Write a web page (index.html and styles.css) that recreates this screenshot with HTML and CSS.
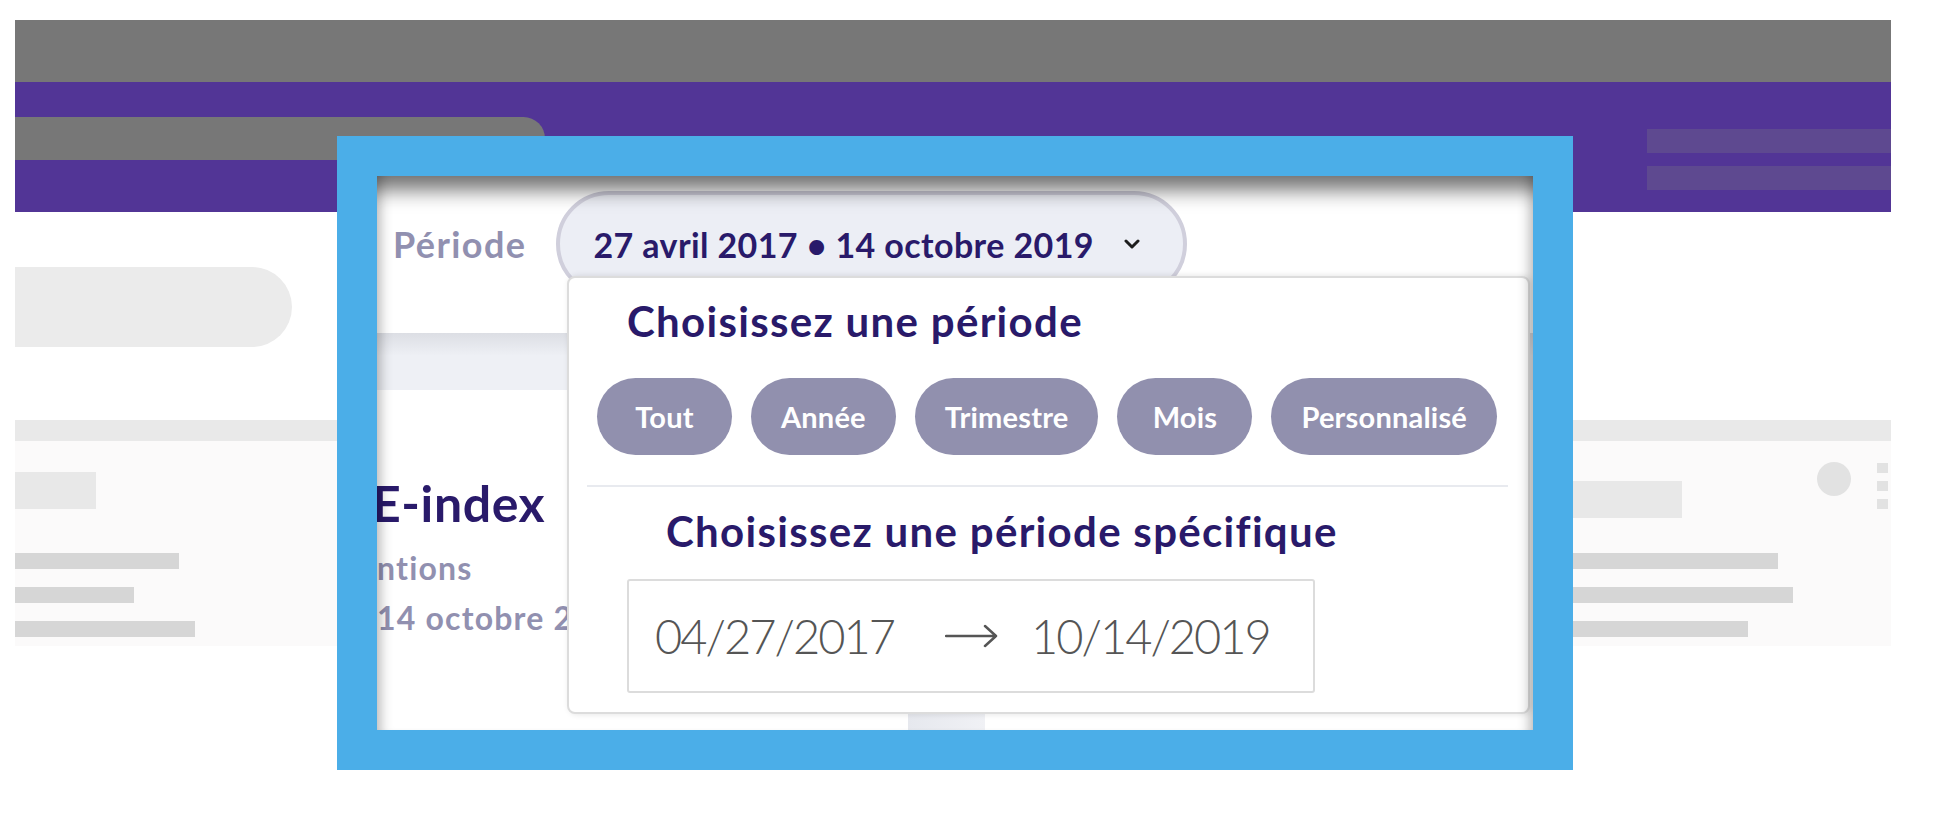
FILE: index.html
```html
<!DOCTYPE html>
<html lang="fr">
<head>
  <meta charset="UTF-8">
  <meta name="viewport" content="width=device-width, initial-scale=1.0">
  <title>Index Égalité - Choix de la période</title>
  <link rel="stylesheet" href="styles.css">
</head>
<body>
  <div class="page">
    <div class="topbar"></div>
    <div class="header">
      <div class="search"></div>
      <div class="header-lines">
        <span></span>
        <span></span>
      </div>
    </div>
    <div class="filter"></div>
    <div class="cards">
      <div class="card card-left">
        <div class="card-top"></div>
        <div class="card-body">
          <div class="card-main">
            <div class="block"></div>
            <div class="line w1"></div>
            <div class="line w2"></div>
            <div class="line w3"></div>
          </div>
        </div>
      </div>
      <div class="card card-right">
        <div class="card-top"></div>
        <div class="card-body">
          <div class="card-main">
            <div class="block"></div>
            <div class="line w4"></div>
            <div class="line w5"></div>
            <div class="line w6"></div>
          </div>
          <div class="card-side">
            <div class="avatar"></div>
            <div class="dots"><span></span><span></span><span></span></div>
          </div>
        </div>
      </div>
    </div>
  </div>

  <!-- zoomed view of the period picker -->
  <div class="frame">
    <div class="zoom">
      <div class="period-bar">
        <span class="period-label">Période</span>
        <div class="period-pill">
          <span>27 avril 2017 • 14 octobre 2019</span>
          <svg width="16" height="10" viewBox="0 0 16 10"><polyline points="2,2 8,8 14,2" fill="none" stroke="#1d1d1d" stroke-width="3" stroke-linecap="round" stroke-linejoin="round"/></svg>
        </div>
      </div>
      <div class="table-head"></div>
      <h1 class="index-title">E-index</h1>
      <p class="index-sub">ntions</p>
      <p class="index-sub">14 octobre 2019</p>
      <div class="stub"></div>

      <div class="dropdown">
        <h2 class="drop-title">Choisissez une période</h2>
        <div class="choices">
          <button class="choice">Tout</button>
          <button class="choice">Année</button>
          <button class="choice">Trimestre</button>
          <button class="choice">Mois</button>
          <button class="choice">Personnalisé</button>
        </div>
        <hr class="divider">
        <h2 class="drop-title specific">Choisissez une période spécifique</h2>
        <div class="range">
          <span>04/27/2017</span>
          <svg class="arrow" width="54" height="24" viewBox="0 0 54 24"><path d="M1 12 H51 M40 2 L51 12 L40 22" fill="none" stroke="#555" stroke-width="2.5" stroke-linecap="round" stroke-linejoin="round"/></svg>
          <span>10/14/2019</span>
        </div>
      </div>
    </div>
  </div>
</body>
</html>
```

FILE: styles.css
```css
* {
  box-sizing: border-box;
}
body {
  margin: 0;
  width: 1954px;
  height: 818px;
  overflow: hidden;
  background: #fff;
  font-family: Lato, "Open Sans", sans-serif;
}

/* background page skeleton */
.page {
  width: 1876px;
  margin: 20px 0 0 15px;
}
.topbar {
  height: 62px;
  background: #777;
}
.header {
  height: 130px;
  background: #523596;
  display: flex;
  justify-content: space-between;
  align-items: flex-start;
}
.search {
  width: 530px;
  height: 43px;
  margin-top: 35px;
  background: #777;
  border-radius: 0 22px 22px 0;
}
.header-lines {
  width: 244px;
  margin-top: 47px;
  display: flex;
  flex-direction: column;
  gap: 13px;
}
.header-lines span {
  height: 24px;
  background: #5e4990;
}
.filter {
  width: 277px;
  height: 80px;
  margin-top: 55px;
  background: #ebebeb;
  border-radius: 0 40px 40px 0;
}
.cards {
  display: flex;
  justify-content: space-between;
  margin-top: 73px;
}
.card {
  width: 560px;
  height: 226px;
  background: #fbfafa;
}
.card-top {
  height: 21px;
  background: #e9e9e9;
}
.card-body {
  display: flex;
}
.card-main {
  flex: 1;
  display: flex;
  flex-direction: column;
  align-items: flex-start;
}
.card-left .card-main {
  padding-top: 31px;
}
.card-right .card-main {
  padding: 40px 0 0 200px;
}
.block {
  height: 37px;
  background: #e8e8e8;
}
.card-left .block {
  width: 81px;
  margin-bottom: 44px;
}
.card-right .block {
  width: 151px;
  margin-bottom: 35px;
}
.line {
  height: 16px;
  margin-bottom: 18px;
  background: #d6d6d6;
}
.w1 { width: 164px; }
.w2 { width: 119px; }
.w3 { width: 180px; }
.w4 { width: 247px; }
.w5 { width: 262px; }
.w6 { width: 217px; }
.card-side {
  display: flex;
  gap: 26px;
  margin: 21px 3px 0 0;
}
.avatar {
  width: 34px;
  height: 34px;
  border-radius: 50%;
  background: #e2e2e2;
}
.dots {
  display: flex;
  flex-direction: column;
  gap: 8px;
  margin-top: 1px;
}
.dots span {
  width: 11px;
  height: 10px;
  background: #e2e2e2;
}

/* highlighted zoom frame */
.frame {
  position: absolute;
  left: 337px;
  top: 136px;
  border: 40px solid #4baee8;
}
.zoom {
  position: relative;
  width: 1156px;
  height: 554px;
  overflow: hidden;
  background: #fff;
}
.zoom::after {
  content: "";
  position: absolute;
  inset: 0;
  pointer-events: none;
  box-shadow: inset 0 30px 20px -16px rgba(0,0,0,0.55),
              inset 14px 0 12px -10px rgba(0,0,0,0.25),
              inset -14px 0 12px -10px rgba(0,0,0,0.25);
}
.period-bar {
  display: flex;
  align-items: center;
  gap: 30px;
  padding: 15px 0 0 16px;
}
.period-label {
  font-size: 36px;
  font-weight: 700;
  letter-spacing: 1.4px;
  color: #9190b0;
}
.period-pill {
  height: 106px;
  display: flex;
  align-items: center;
  gap: 30px;
  padding: 0 43px 0 33px;
  border: 4px solid #d0cfdc;
  border-radius: 53px;
  background: #eceef5;
  font-size: 34px;
  font-weight: 700;
  letter-spacing: 0.4px;
  color: #291a6a;
}
.table-head {
  height: 57px;
  margin-top: 36px;
  background: linear-gradient(#dcdee4, #eef0f5 40%);
}
.index-title {
  margin: 88px 0 0 -5px;
  font-size: 50px;
  line-height: 50px;
  font-weight: 700;
  letter-spacing: 0.6px;
  color: #291a6a;
}
.index-sub {
  margin: 0;
  font-size: 32px;
  line-height: 50px;
  font-weight: 700;
  letter-spacing: 1.2px;
  color: #9190b0;
}
.index-title + .index-sub {
  margin-top: 15px;
}
.stub {
  width: 77px;
  height: 200px;
  margin: 17px 0 0 531px;
  background: linear-gradient(90deg, #e6e8ee, #f0f1f5);
}

/* dropdown */
.dropdown {
  position: absolute;
  left: 190px;
  top: 100px;
  width: 963px;
  height: 438px;
  border: 2px solid #dcdcdc;
  border-radius: 8px;
  background: #fff;
  box-shadow: 2px 0 6px rgba(0,0,0,0.12);
}
.drop-title {
  margin: 18px 0 0 58px;
  font-size: 42px;
  line-height: 50px;
  font-weight: 700;
  letter-spacing: 1.3px;
  color: #291a6a;
}
.drop-title.specific {
  margin: 19px 0 0 97px;
}
.choices {
  display: flex;
  gap: 19px;
  margin: 32px 0 0 28px;
}
.choice {
  min-width: 135px;
  height: 77px;
  padding: 0 30px;
  border: none;
  border-radius: 39px;
  background: #9190ae;
  color: #fff;
  font-family: inherit;
  font-size: 29px;
  font-weight: 700;
  letter-spacing: 0.2px;
}
.divider {
  height: 2px;
  margin: 30px 20px 0 18px;
  border: none;
  background: #e8eaef;
}
.range {
  width: 688px;
  height: 114px;
  margin: 23px 0 0 58px;
  display: flex;
  align-items: center;
  padding-left: 26px;
  border: 2px solid #dcdcdc;
  border-radius: 3px;
  font-size: 47px;
  font-weight: 300;
  letter-spacing: -2px;
  color: #555;
}
.arrow {
  margin: 0 32px 0 51px;
}
```
